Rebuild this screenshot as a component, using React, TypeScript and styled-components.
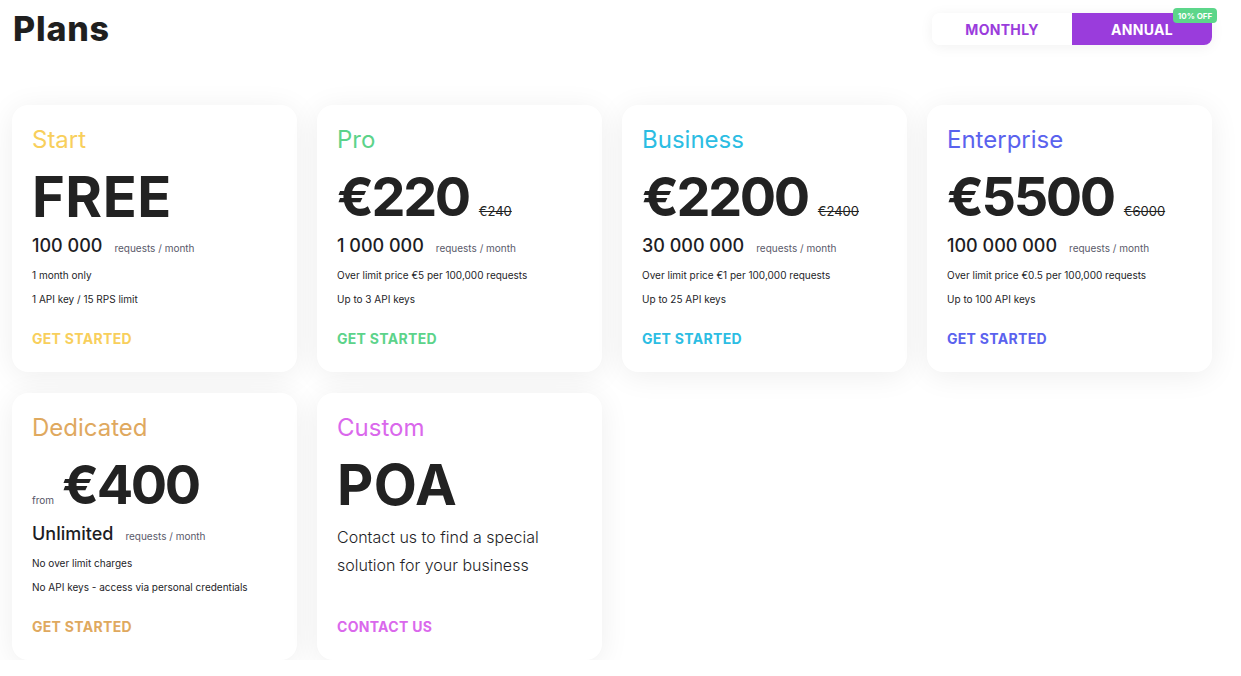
import styled, { createGlobalStyle } from 'styled-components';

const GlobalStyle = createGlobalStyle`
  * { box-sizing: border-box; }
  body {
    margin: 0;
    background: #ffffff;
    font-family: Inter, "Noto Sans", sans-serif;
    color: #222222;
  }
`;

const Page = styled.div`
  width: 1241px;
  padding: 9px 0 0 12px;
`;

const Header = styled.div`
  width: 1200px;
  display: flex;
  justify-content: space-between;
  align-items: flex-start;
`;

const Title = styled.h1`
  margin: 0 0 0 1px;
  font-size: 34px;
  line-height: 40px;
  font-weight: 800;
  letter-spacing: 0.8px;
  color: #1f1f1f;
`;

const Toggle = styled.div`
  position: relative;
  margin-top: 4px;
  width: 280px;
  height: 32px;
  display: flex;
  border-radius: 8px;
  background: #ffffff;
  box-shadow: 0 2px 14px rgba(0, 0, 0, 0.06);
`;

const ToggleOption = styled.div<{ $active?: boolean }>`
  flex: 1;
  display: flex;
  align-items: center;
  justify-content: center;
  font-size: 14px;
  font-weight: 700;
  letter-spacing: 0.3px;
  border-radius: ${p => (p.$active ? '0 8px 8px 0' : '8px 0 0 8px')};
  background: ${p => (p.$active ? '#9a3cdc' : '#ffffff')};
  color: ${p => (p.$active ? '#ffffff' : '#9a3cdc')};
`;

const Badge = styled.span`
  position: absolute;
  top: -5px;
  right: -5px;
  width: 44px;
  height: 15px;
  display: flex;
  align-items: center;
  justify-content: center;
  border-radius: 4px;
  background: #5cd68a;
  color: #ffffff;
  font-size: 8px;
  font-weight: 700;
`;

const Grid = styled.div`
  margin-top: 56px;
  width: 1200px;
  display: grid;
  grid-template-columns: repeat(4, 285px);
  column-gap: 20px;
  row-gap: 21px;
`;

const Card = styled.div`
  height: 267px;
  padding: 20px 20px 23px;
  display: flex;
  flex-direction: column;
  background: #ffffff;
  border-radius: 16px;
  box-shadow: 0 4px 30px rgba(0, 0, 0, 0.07);
`;

const PlanName = styled.div<{ $color: string }>`
  font-size: 24px;
  line-height: 30px;
  font-weight: 400;
  color: ${p => p.$color};
`;

const PriceRow = styled.div`
  margin-top: 10px;
  height: 64px;
  display: flex;
  align-items: baseline;
  gap: 10px;
`;

const From = styled.span`
  font-size: 10px;
  color: #555566;
  margin-right: -2px;
`;

const Price = styled.span<{ $numeric?: boolean }>`
  font-size: ${p => (p.$numeric ? '54px' : '56px')};
  line-height: 64px;
  font-weight: 700;
  letter-spacing: ${p => (p.$numeric ? '-2.4px' : '0.5px')};
  color: #222222;
`;

const OldPrice = styled.span`
  font-size: 13px;
  color: #222222;
  text-decoration: line-through;
`;

const CountRow = styled.div`
  margin-top: 5px;
  height: 24px;
  display: flex;
  align-items: baseline;
  gap: 12px;
`;

const Count = styled.span`
  font-size: 18px;
  line-height: 24px;
  font-weight: 500;
  color: #1d1d24;
`;

const Unit = styled.span`
  font-size: 10px;
  color: #5a5a6a;
`;

const Features = styled.div`
  margin-top: 9px;
  display: flex;
  flex-direction: column;
  gap: 8px;
`;

const Feature = styled.div`
  font-size: 10px;
  line-height: 16px;
  color: #1d1d28;
`;

const Description = styled.p`
  margin: 6px 0 0;
  font-size: 16px;
  line-height: 28px;
  font-weight: 300;
  color: #1f1f28;
`;

const Cta = styled.a<{ $color: string }>`
  margin-top: auto;
  font-size: 14px;
  line-height: 20px;
  font-weight: 700;
  letter-spacing: 0.3px;
  color: ${p => p.$color};
  text-decoration: none;
  cursor: pointer;
`;

type Plan = {
  name: string;
  color: string;
  price: string;
  oldPrice?: string;
  from?: boolean;
  count?: string;
  features?: string[];
  description?: string;
  cta: string;
};

const plans: Plan[] = [
  {
    name: 'Start',
    color: '#f8cf5c',
    price: 'FREE',
    count: '100 000',
    features: ['1 month only', '1 API key / 15 RPS limit'],
    cta: 'GET STARTED',
  },
  {
    name: 'Pro',
    color: '#5cd38a',
    price: '€220',
    oldPrice: '€240',
    count: '1 000 000',
    features: ['Over limit price €5 per 100,000 requests', 'Up to 3 API keys'],
    cta: 'GET STARTED',
  },
  {
    name: 'Business',
    color: '#2cbde3',
    price: '€2200',
    oldPrice: '€2400',
    count: '30 000 000',
    features: ['Over limit price €1 per 100,000 requests', 'Up to 25 API keys'],
    cta: 'GET STARTED',
  },
  {
    name: 'Enterprise',
    color: '#5a62ee',
    price: '€5500',
    oldPrice: '€6000',
    count: '100 000 000',
    features: ['Over limit price €0.5 per 100,000 requests', 'Up to 100 API keys'],
    cta: 'GET STARTED',
  },
  {
    name: 'Dedicated',
    color: '#dfa95f',
    price: '€400',
    from: true,
    count: 'Unlimited',
    features: ['No over limit charges', 'No API keys - access via personal credentials'],
    cta: 'GET STARTED',
  },
  {
    name: 'Custom',
    color: '#da68ec',
    price: 'POA',
    description: 'Contact us to find a special solution for your business',
    cta: 'CONTACT US',
  },
];

const PlanCard = ({ plan }: { plan: Plan }) => (
  <Card>
    <PlanName $color={plan.color}>{plan.name}</PlanName>
    <PriceRow>
      {plan.from && <From>from</From>}
      <Price $numeric={plan.price.startsWith('€')}>{plan.price}</Price>
      {plan.oldPrice && <OldPrice>{plan.oldPrice}</OldPrice>}
    </PriceRow>
    {plan.count && (
      <CountRow>
        <Count>{plan.count}</Count>
        <Unit>requests / month</Unit>
      </CountRow>
    )}
    {plan.features && (
      <Features>
        {plan.features.map(f => (
          <Feature key={f}>{f}</Feature>
        ))}
      </Features>
    )}
    {plan.description && <Description>{plan.description}</Description>}
    <Cta $color={plan.color}>{plan.cta}</Cta>
  </Card>
);

export default function App() {
  return (
    <>
      <GlobalStyle />
      <Page>
        <Header>
          <Title>Plans</Title>
          <Toggle>
            <ToggleOption>MONTHLY</ToggleOption>
            <ToggleOption $active>ANNUAL</ToggleOption>
            <Badge>10% OFF</Badge>
          </Toggle>
        </Header>
        <Grid>
          {plans.map(p => (
            <PlanCard key={p.name} plan={p} />
          ))}
        </Grid>
      </Page>
    </>
  );
}
